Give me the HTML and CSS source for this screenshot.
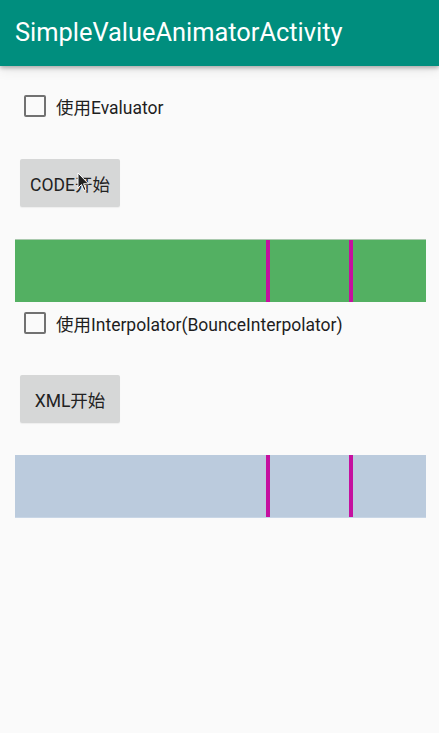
FILE: index.html
```html
<!DOCTYPE html>
<html>
<head>
<meta charset="utf-8">
<link rel="stylesheet" href="styles.css">
</head>
<body>
<header class="toolbar"><span class="title">SimpleValueAnimatorActivity</span></header>
<main class="content">
  <label class="check-row row1"><span class="box"></span><span class="label">使用Evaluator</span></label>
  <button class="btn btn1">CODE开始</button>
  <div class="bar green"><span class="mark m1"></span><span class="mark m2"></span></div>
  <label class="check-row row2"><span class="box"></span><span class="label">使用Interpolator(BounceInterpolator)</span></label>
  <button class="btn btn2">XML开始</button>
  <div class="bar blue"><span class="mark m1"></span><span class="mark m2"></span></div>
</main>
<svg class="cursor" width="14" height="20" viewBox="0 0 14 20"><path d="M1 1 L1 16 L4.5 12.5 L7 18.5 L9 17.6 L6.6 11.8 L11.5 11.8 Z" fill="#222" stroke="#fff" stroke-width="1"/></svg>
</body>
</html>
```
FILE: styles.css
```css
html, body { margin: 0; padding: 0; }
body {
  width: 439px; height: 733px; overflow: hidden;
  background: #fafafa;
  font-family: Roboto, "Noto Sans CJK SC", sans-serif;
  position: relative;
}
.toolbar {
  height: 66px; background: #008e7e;
  display: flex; align-items: center;
  padding-left: 15px;
  box-shadow: 0 2px 4px rgba(0,0,0,0.28), 0 4px 12px rgba(0,0,0,0.08);
  position: relative; z-index: 1;
}
.title { color: #fff; font-size: 25.4px; margin-top: -2px; }
.content { display: flex; flex-direction: column; align-items: flex-start; padding: 0 13px 0 15px; }
.check-row { display: flex; align-items: center; height: 24px; padding-left: 9px; }
.row1 { margin-top: 28px; }
.row2 { margin-top: 9px; }
.box {
  width: 18px; height: 18px; border: 2px solid #717171; border-radius: 2px;
  box-sizing: content-box; flex: none;
}
.label { margin-left: 10px; font-size: 17.5px; color: #1e1e1e; white-space: nowrap; }
.btn {
  margin-left: 5px; width: 100px; height: 48px;
  background: #d6d7d7; border: none; border-radius: 2px;
  font-family: Roboto, "Noto Sans CJK SC", sans-serif;
  font-size: 17.5px; color: #222; padding: 0;
  box-shadow: 0 1px 1px rgba(0,0,0,0.05);
}
.btn1 { margin-top: 41px; }
.btn2 { margin-top: 40px; }
.bar { position: relative; width: 411px; height: 62px; margin-top: 32px; }
.green { background: #53b062; border-top: 1px solid #a9c9ad; margin-top: 32px; }
.blue { background: #bbcbdd; margin-top: 32px; border-bottom: 1px solid #c8d6e6; }
.mark { position: absolute; top: 0; bottom: 0; width: 4px; background: #c5109f; }
.m1 { left: 251px; }
.m2 { left: 334px; }
.cursor { position: absolute; left: 77px; top: 172px; }
```
